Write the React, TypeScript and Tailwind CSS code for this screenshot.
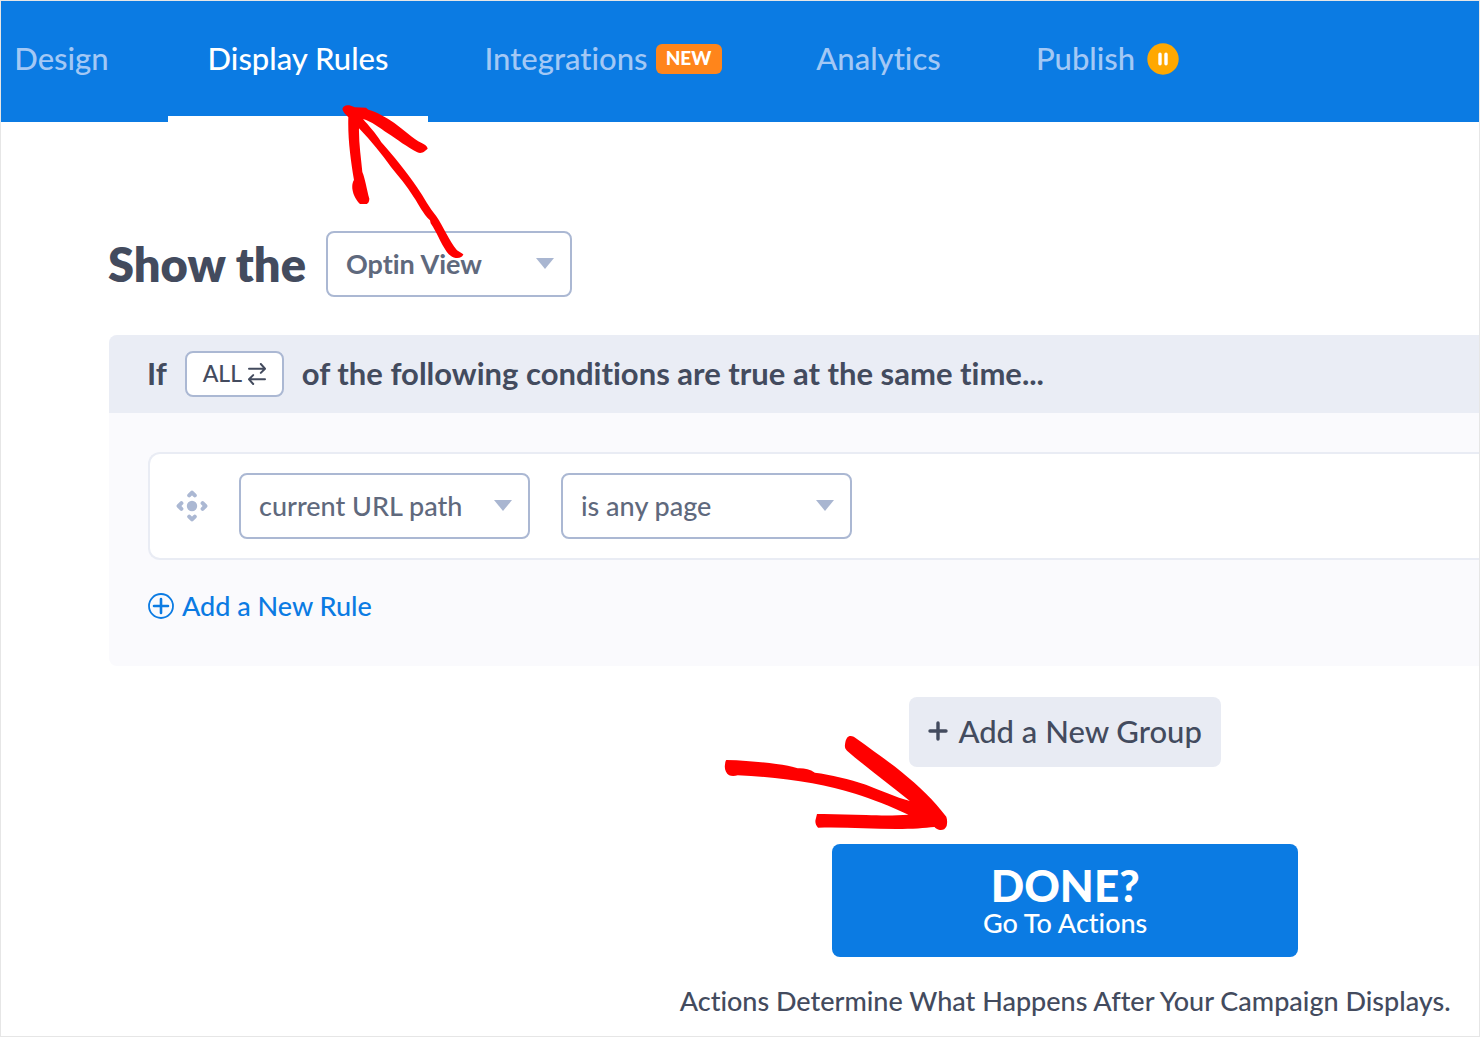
import type { ReactNode } from 'react';

interface SelectBoxProps {
  label: string;
  options: string[];
  className: string;
}

function SelectBox({ label, options, className }: SelectBoxProps) {
  return (
    <div className={`relative h-[66px] shrink-0 ${className}`}>
      <select
        aria-label={label}
        className="size-full appearance-none rounded-lg border-2 border-[#abb8d3] bg-white pl-[18px] pr-12 text-[27px] text-[#5f697d]"
      >
        {options.map((option) => (
          <option key={option}>{option}</option>
        ))}
      </select>
      <svg className="pointer-events-none absolute right-[18px] top-[27px] h-[11px] w-[18px]" viewBox="0 0 18 11">
        <path d="M0 0h18L9 11z" fill="#a9b6d1" />
      </svg>
    </div>
  );
}

interface TabProps {
  active?: boolean;
  className?: string;
  children: ReactNode;
}

function Tab({ active, className = '', children }: TabProps) {
  return (
    <a
      href="#"
      aria-current={active ? 'page' : undefined}
      className={`relative flex h-full shrink-0 items-center justify-center gap-2 whitespace-nowrap pb-1.5 ${
        active ? 'text-white' : 'text-[#a3c8f5]'
      } ${className}`}
    >
      {children}
      {active && <span className="absolute inset-x-0 bottom-0 h-1.5 bg-white" />}
    </a>
  );
}

/* Hand-drawn arrow pointing up at the active tab */
function TabArrow() {
  return (
    <svg
      className="pointer-events-none absolute left-[172px] top-[102px] z-10 h-[157px] w-[126px]"
      viewBox="60 39 378 471"
      fill="#ff0000"
    >
      <path d="M67 57C70 47 78 44 88 46L105 52L138 53L145 59C172 66 198 82 222 98C251 119 278 145 305 159C315 163 322 170 323 176L314 184C308 189 299 190 292 187C262 172 231 148 203 130C179 113 154 94 129 87C145 106 165 126 184 157C221 198 260 247 291 292C313 324 328 354 349 379C369 407 387 453 411 481L430 493C427 502 420 505 407 504C397 503 388 495 380 485C362 460 351 428 332 400L330 391C308 370 298 346 281 321C260 287 235 258 213 231C185 193 155 154 117 115C116 157 123 203 127 246C136 268 140 298 148 326C148 334 145 340 140 342L120 342C110 332 100 317 97 296C96 285 98 276 102 270C92 211 83 145 85 82C78 74 69 67 67 57Z" />
    </svg>
  );
}

/* Hand-drawn arrow pointing at the done button */
function DoneArrow() {
  return (
    <svg
      className="pointer-events-none absolute -left-[110px] -top-[111px] z-10 h-[99px] w-[230px]"
      viewBox="62 159 644 297"
      preserveAspectRatio="none"
      fill="#ff0000"
    >
      <path d="M74 240C128 241 176 247 214 252C237 255 258 259 274 265C290 264 307 267 322 278C367 284 418 297 465 314C507 331 548 351 588 363C530 313 466 262 412 212C406 207 405 199 407 189C409 176 414 168 422 168C428 168 434 172 439 176C479 207 525 242 564 275C614 318 655 361 690 410C693 419 693 429 691 438C687 448 680 451 672 450C665 449 660 445 657 441C630 444 595 447 551 447C475 446 404 441 331 443C325 437 322 426 324 419L328 402C373 401 418 404 465 405C511 407 548 407 584 404C536 379 480 356 435 341C397 329 358 318 315 310C247 297 177 289 106 286C98 289 88 289 82 286C73 280 69 268 70 257C71 249 71 244 74 240Z" />
    </svg>
  );
}

function MoveIcon() {
  return (
    <svg className="h-8 w-8 shrink-0" viewBox="0 0 32 32" fill="none" stroke="#abb8d3" strokeWidth="4" strokeLinecap="round" strokeLinejoin="round">
      <circle cx="16" cy="16" r="5.2" fill="#abb8d3" stroke="none" />
      <path d="M13.2 5.4 16 2.6l2.8 2.8M13.2 26.6l2.8 2.8 2.8-2.8M5.4 13.2 2.6 16l2.8 2.8M26.6 13.2l2.8 2.8-2.8 2.8" />
    </svg>
  );
}

export default function App() {
  return (
    <div className="min-h-screen overflow-hidden border border-[#e6e6e6] bg-white font-['Lato','Open_Sans',sans-serif] text-[27px] font-medium text-[#434b5e] [font-variant-ligatures:none]">
      <nav className="-ml-[26px] flex h-[121px] gap-5 bg-[#0b7be3] text-[31px]">
        <Tab className="w-[173px]">Design</Tab>
        <Tab active className="w-[260px]">
          Display Rules
          <TabArrow />
        </Tab>
        <Tab className="w-[310px]">
          Integrations
          <span className="flex h-[30px] w-[66px] items-center justify-center rounded-md bg-[#ff851b] text-[19px] font-black text-white">
            NEW
          </span>
        </Tab>
        <Tab className="w-[201px]">Analytics</Tab>
        <Tab className="w-[217px]">
          Publish
          <svg className="ml-1 h-8 w-8" viewBox="0 0 32 32">
            <circle cx="16" cy="16" r="15.7" fill="#ffa800" />
            <path d="M13 11.2v9.6M19 11.2v9.6" stroke="#fff" strokeWidth="3.4" strokeLinecap="round" />
          </svg>
        </Tab>
      </nav>

      <main className="pt-[109px]">
        <div className="flex items-center gap-5 pl-[107px]">
          <h1 className="whitespace-nowrap text-[47px] font-extrabold leading-[66px]">Show the</h1>
          <SelectBox label="View" options={['Optin View', 'Success View']} className="w-[246px] font-bold" />
        </div>

        <section className="ml-[108px] mt-[38px] overflow-hidden rounded-l-lg bg-[#fafafd]">
          <header className="flex h-[78px] items-center gap-[18px] whitespace-nowrap bg-[#eaedf5] pb-px pl-[38px] text-[31px] font-bold">
            <span>If</span>
            <button
              type="button"
              className="flex h-[46px] w-[99px] items-center justify-center gap-1.5 rounded-lg border-2 border-[#abb8d3] bg-white text-[23px] font-medium"
            >
              ALL
              <svg className="h-[22px] w-[18px]" viewBox="0 0 18 22" fill="none" stroke="currentColor" strokeWidth="2" strokeLinecap="round" strokeLinejoin="round">
                <path d="M1 5.7h15.5M12.8 1l4.2 4.7-4.2 4.2M17 16.3H1.5M5.2 12.1 1 16.3 5.2 21" />
              </svg>
            </button>
            <span>of the following conditions are true at the same time...</span>
          </header>

          <div className="pb-[38px] pl-[39px] pt-[39px]">
            <div className="flex h-[108px] items-center rounded-l-xl border-2 border-r-0 border-[#e9ecf4] bg-white pl-[26px]">
              <MoveIcon />
              <SelectBox label="Rule" options={['current URL path', 'time on page']} className="ml-[31px] w-[291px]" />
              <SelectBox label="Condition" options={['is any page', 'exactly matches']} className="ml-[31px] w-[291px]" />
            </div>
            <button type="button" className="mt-6 flex h-11 items-center gap-2 text-[#0b7be3]">
              <svg className="h-[26px] w-[26px]" viewBox="0 0 26 26" fill="none" stroke="currentColor" strokeLinecap="round">
                <circle cx="13" cy="13" r="12" strokeWidth="1.8" />
                <path d="M13 6v14M6 13h14" strokeWidth="2.6" />
              </svg>
              Add a New Rule
            </button>
          </div>
        </section>

        <div className="flex flex-col items-center whitespace-nowrap pl-[44%]">
          <button
            type="button"
            className="mt-[31px] flex h-[70px] w-[312px] items-center justify-center gap-2.5 rounded-lg bg-[#e8ebf3] pb-0.5 text-[31px]"
          >
            <svg className="h-5 w-5" viewBox="0 0 20 20" fill="none" stroke="currentColor" strokeWidth="3.4" strokeLinecap="round">
              <path d="M10 2v16M2 10h16" />
            </svg>
            Add a New Group
          </button>
          <div className="relative mt-[77px]">
            <DoneArrow />
            <button
              type="button"
              className="flex h-[113px] w-[466px] flex-col items-center justify-center rounded-lg bg-[#0b7be3] text-white"
            >
              <strong className="text-[44px] font-black leading-[44px]">DONE?</strong>
              <span className="leading-8">Go To Actions</span>
            </button>
          </div>
          <p className="mt-6 leading-10">Actions Determine What Happens After Your Campaign Displays.</p>
        </div>
      </main>
    </div>
  );
}
